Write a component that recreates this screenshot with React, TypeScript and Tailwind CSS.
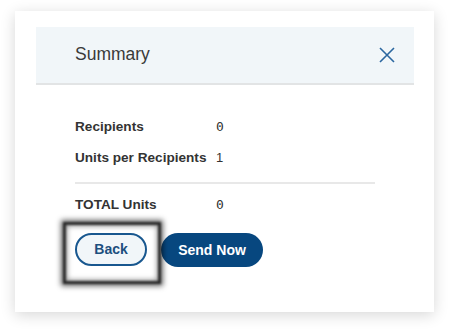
import React from "react";

export default function App() {
  const font = { fontFamily: '"Liberation Sans", Arial, Helvetica, sans-serif' };
  const mono = { fontFamily: '"DejaVu Sans Mono", monospace' };
  return (
    <div className="w-[449px] h-[331px] bg-white pt-[11px] pl-[15px]" style={font}>
      <div className="w-[419px] h-[301px] bg-white pl-[21px] pt-[16px] shadow-[0_3px_14px_rgba(0,0,0,0.16)]">
        <div className="w-[378px] h-[58px] bg-[#f1f6f9] border-b-2 border-[#e2e4e5] flex items-center justify-between pl-[39px] pr-[19px]">
          <span className="text-[17.5px] text-[#3a3a3a] leading-none">Summary</span>
          <svg width="16" height="16" viewBox="0 0 16 16" className="block">
            <path d="M1 1 L15 15 M15 1 L1 15" stroke="#2b67a0" strokeWidth="1.6" fill="none" />
          </svg>
        </div>
        <div className="w-[378px] pl-[39px] pr-[39px] pt-[32px]">
          <div className="flex h-[20px] items-center">
            <span className="w-[141px] font-bold text-[13.6px] text-[#333333]">Recipients</span>
            <span className="text-[13px] text-[#333333]" style={mono}>0</span>
          </div>
          <div className="flex h-[20px] items-center mt-[11px]">
            <span className="w-[141px] font-bold text-[13.6px] text-[#333333]">Units per Recipients</span>
            <span className="text-[13px] text-[#333333]">1</span>
          </div>
          <div className="h-[2px] bg-[#e8e8e8] mt-[14px]" />
          <div className="flex h-[20px] items-center mt-[11px]">
            <span className="w-[141px] font-bold text-[13.6px] text-[#333333]">TOTAL Units</span>
            <span className="text-[13px] text-[#333333]" style={mono}>0</span>
          </div>
          <div className="flex mt-[18px] gap-[14px]">
            <div className="relative">
              <div className="absolute -left-[12px] -top-[11px] w-[98px] h-[62px] border-[3px] border-[#2a2a2a] blur-[1px] shadow-[0_0_5px_2px_rgba(0,0,0,0.6),inset_0_0_5px_1px_rgba(0,0,0,0.45)] pointer-events-none" />
              <button className="relative w-[72px] h-[33px] rounded-full border-2 border-[#18578f] bg-[#f1f6f9] text-[#1c4f7e] font-bold text-[14px]">
                Back
              </button>
            </div>
            <button className="w-[102px] h-[34px] rounded-full bg-[#07477f] text-white font-bold text-[14px]">
              Send Now
            </button>
          </div>
        </div>
      </div>
    </div>
  );
}
